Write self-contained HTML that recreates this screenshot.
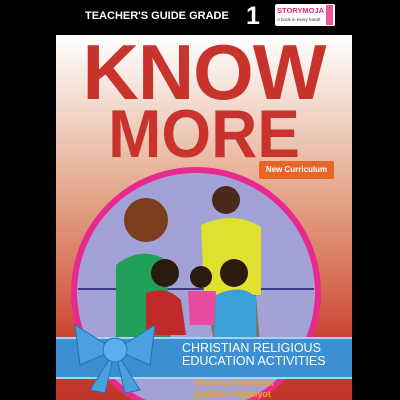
<!DOCTYPE html>
<html><head><style>
body{margin:0;width:400px;height:400px;background:#000;overflow:hidden;position:relative;font-family:"Liberation Sans",sans-serif}
.cover{position:absolute;left:56px;top:35px;width:296px;height:365px;background:linear-gradient(#fff 0%,#f2d8cc 20%,#e3a487 45%,#d8745a 65%,#c8402e 85%,#c0352a 100%);overflow:hidden}
.t{position:absolute;white-space:nowrap}
</style></head><body>
<div class="t" style="left:85px;top:10px;color:#fff;font-weight:bold;font-size:11px">TEACHER'S GUIDE GRADE</div>
<div class="t" style="left:246px;top:2px;color:#fff;font-weight:bold;font-size:25px">1</div>
<div style="position:absolute;left:275px;top:4px;width:60px;height:22px;background:#fff;border-radius:2px"></div>
<div class="t" style="left:277px;top:6px;color:#e0287a;font-weight:bold;font-size:7.5px">STORYMOJA</div>
<div class="t" style="left:277px;top:17px;color:#333;font-size:4.5px">A book in every hand!</div>
<div style="position:absolute;left:326px;top:5px;width:7px;height:20px;background:#e85aa0"></div>
<div class="cover">
<div class="t" style="left:20px;top:-8px;width:256px;text-align:center;color:#c8332b;font-weight:bold;font-size:78px;letter-spacing:-1px">KNOW</div>
<div class="t" style="left:20px;top:60px;width:256px;text-align:center;color:#c8332b;font-size:68px;font-weight:bold;transform:scaleX(.94)">MORE</div>
<div class="t" style="left:203px;top:126px;width:75px;height:18px;background:#e8652a;border-radius:2px;color:#fff;font-weight:bold;font-size:8px;line-height:18px;text-align:center">New Curriculum</div>
<svg style="position:absolute;left:0;top:0" width="296" height="365">
<circle cx="140" cy="257" r="122" fill="#a3a2d6" stroke="#e82a8f" stroke-width="6"/>
<line x1="22" y1="254" x2="258" y2="254" stroke="#3c3c8a" stroke-width="2"/>
<circle cx="90" cy="185" r="22" fill="#7a3d1d"/>
<path d="M60 230 Q85 210 110 225 L115 310 L60 310Z" fill="#21a05a"/>
<circle cx="170" cy="165" r="14" fill="#4a2a1a"/>
<path d="M145 190 Q178 175 205 192 L205 260 L148 260Z" fill="#e0e030"/>
<path d="M150 260 L200 260 L205 320 L160 320Z" fill="#777"/>
<circle cx="109" cy="238" r="14" fill="#2a1a10"/>
<path d="M90 258 Q110 250 125 265 L130 300 L90 300Z" fill="#c02a2a"/>
<circle cx="145" cy="242" r="11" fill="#2a1a10"/>
<path d="M132 256 L160 256 L158 290 L134 290Z" fill="#e84aa0"/>
<circle cx="178" cy="238" r="14" fill="#2a1a10"/>
<path d="M160 260 Q185 248 200 262 L200 305 L158 305Z" fill="#3aa0d8"/>
</svg>
<div style="position:absolute;left:0;top:302px;width:296px;height:38px;background:#3d8fd4;border-top:2px solid #a8d4f4;border-bottom:2px solid #a8d4f4"></div>
<svg style="position:absolute;left:14px;top:280px" width="100" height="80"><path d="M45 35 L5 10 L10 50Z M45 35 L85 10 L80 50Z M45 35 L20 75 L35 78Z M45 35 L70 75 L55 78Z" fill="#4aa0e0" stroke="#2a70b0"/><circle cx="45" cy="35" r="12" fill="#5ab0ec" stroke="#2a70b0"/></svg>
<div class="t" style="left:126px;top:307px;color:#fff;font-size:12.5px;line-height:13px">CHRISTIAN RELIGIOUS<br>EDUCATION ACTIVITIES</div>
<div class="t" style="left:139px;top:343px;color:#f5a020;font-weight:bold;font-size:9px;line-height:11px">Rebecca Makabira<br>Evaline Cheruiyot</div>
</div>
</body></html>
